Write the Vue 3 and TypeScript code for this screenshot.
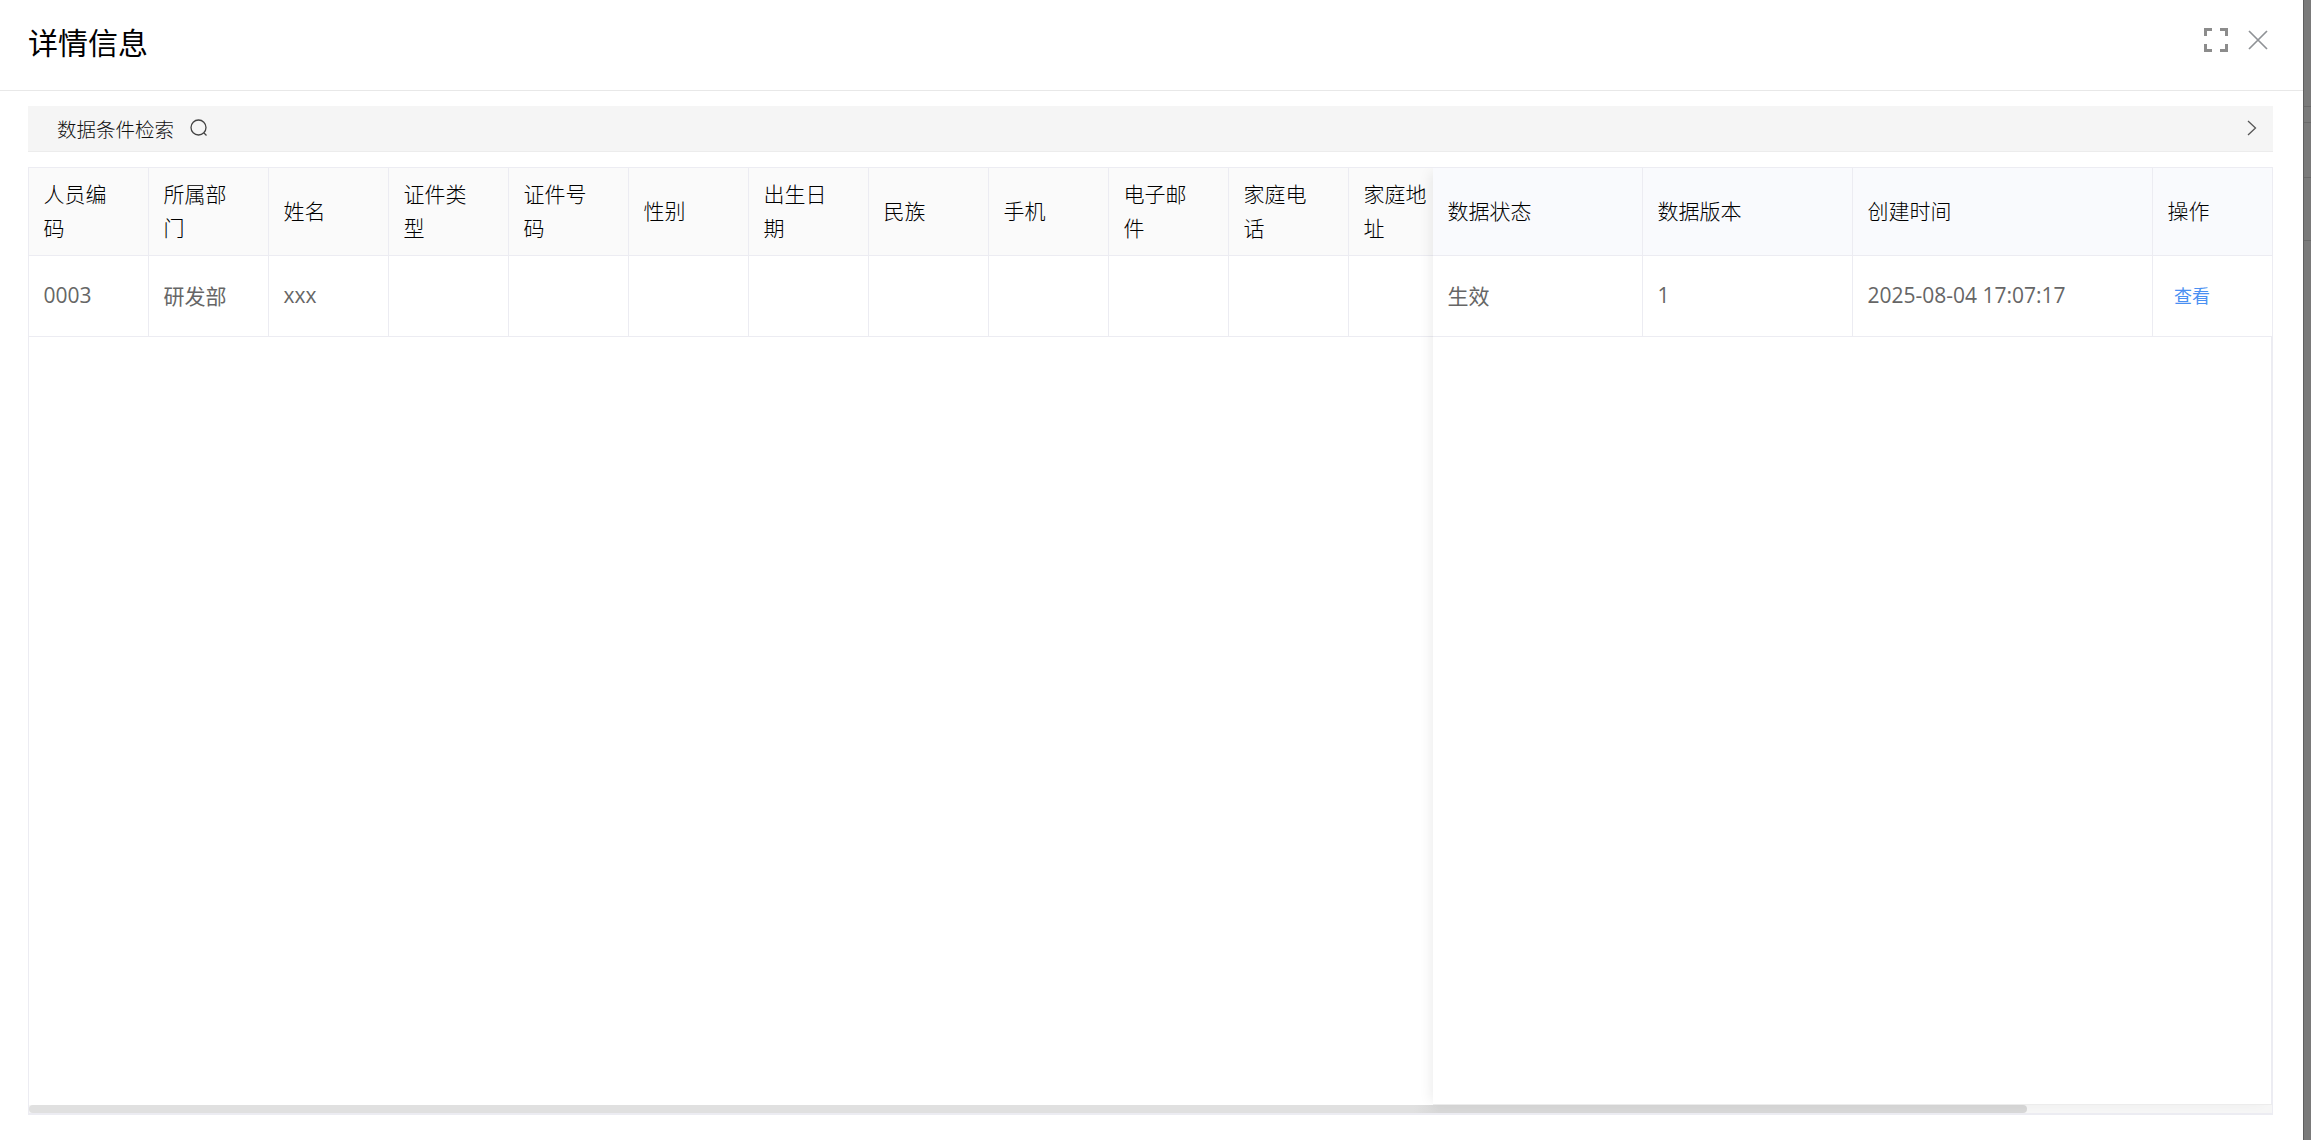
<script setup lang="ts">
interface Col { title: string; value?: string; link?: boolean }

const scrollCols: Col[] = [
  { title: '人员编码', value: '0003' },
  { title: '所属部门', value: '研发部' },
  { title: '姓名', value: 'xxx' },
  { title: '证件类型' },
  { title: '证件号码' },
  { title: '性别' },
  { title: '出生日期' },
  { title: '民族' },
  { title: '手机' },
  { title: '电子邮件' },
  { title: '家庭电话' },
  { title: '家庭地址' },
]

const fixedCols: (Col & { width: number })[] = [
  { title: '数据状态', value: '生效', width: 210 },
  { title: '数据版本', value: '1', width: 210 },
  { title: '创建时间', value: '2025-08-04 17:07:17', width: 300 },
  { title: '操作', value: '查看', link: true, width: 119 },
]
</script>

<template>
  <div class="backdrop">
    <section class="dialog">
      <header class="head">
        <h1 class="title">详情信息</h1>
        <div class="tools">
          <svg width="24" height="24" viewBox="0 0 24 24" fill="none" stroke="#8c8c8c" stroke-width="3">
            <path d="M1.500 8V1.500H8M16 1.500h6.500V8M22.500 16v6.500H16M8 22.500H1.500V16" />
          </svg>
          <svg class="ico-close" width="20" height="20" viewBox="0 0 20 20" fill="none" stroke="#8f9296" stroke-width="1.700">
            <path d="M1 1l18 18M19 1L1 19" />
          </svg>
        </div>
      </header>

      <div class="body">
        <div class="search">
          <span class="search-label">数据条件检索</span>
          <svg class="search-ico" width="20" height="20" viewBox="0 0 20 20" fill="none" stroke="#444" stroke-width="1.300">
            <circle cx="9.500" cy="9.500" r="7.500" />
            <path d="M15 15l2.500 2.500" />
          </svg>
          <svg class="chev" width="10" height="16" viewBox="0 0 10 16" fill="none" stroke="#555" stroke-width="1.300">
            <path d="M1 1l7.500 7L1 15" />
          </svg>
        </div>

        <div class="table">
          <div class="scroll-part">
            <div v-for="c in scrollCols" :key="c.title" class="col">
              <div class="cell th">{{ c.title }}</div>
              <div class="cell td">{{ c.value }}</div>
            </div>
          </div>
          <div class="scrollbar"><div class="thumb"></div></div>
          <div class="fixed-part">
            <div v-for="c in fixedCols" :key="c.title" class="col fixed-col" :style="{ width: c.width + 'px' }">
              <div class="cell th th-fixed">{{ c.title }}</div>
              <div class="cell td" :class="{ link: c.link }">{{ c.value }}</div>
            </div>
          </div>
        </div>
      </div>
    </section>
  </div>
</template>

<style>
html, body { margin: 0; padding: 0; background: #fff; overflow: hidden; }
</style>

<style scoped>
.backdrop {
  width: 2311px;
  height: 1140px;
  background-color: #7a7a7a;
  background-image:
    linear-gradient(#6a6a6a, #6a6a6a),
    linear-gradient(#6a6a6a, #6a6a6a),
    linear-gradient(#6a6a6a, #6a6a6a),
    linear-gradient(#6a6a6a, #6a6a6a);
  background-repeat: no-repeat;
  background-size: 100% 1px;
  background-position: 0 106px, 0 122px, 0 177px, 0 240px;
  overflow: hidden;
}
.dialog {
  width: 2303px;
  height: 1140px;
  background: #fff;
  font-family: "Noto Sans CJK SC", "Liberation Sans", sans-serif;
  display: flex;
  flex-direction: column;
  border-right: 1px solid #5e5e5e;
  box-sizing: content-box;
}
.head {
  height: 91px;
  flex: none;
  box-sizing: border-box;
  border-bottom: 1px solid #e8e8e8;
  padding: 0 35px 0 28px;
  display: flex;
  justify-content: space-between;
}
.title {
  margin: 0;
  font-size: 30px;
  line-height: 82px;
  font-weight: 400;
  color: #000;
}
.tools {
  display: flex;
  align-items: flex-start;
  gap: 20px;
  padding-top: 28px;
}
.ico-close { margin-top: 2px; }
.body {
  padding: 15px 30px 0 28px;
}
.search {
  height: 46px;
  box-sizing: border-box;
  background: #f5f5f5;
  border-bottom: 1px solid #ececec;
  padding: 0 16px 0 29px;
  display: flex;
  align-items: center;
  font-size: 19.5px;
  font-weight: 300;
  color: #111;
}
.search-ico { margin-left: 15px; margin-top: -1px; }
.chev { margin-left: auto; margin-top: -2px; }
.table {
  position: relative;
  margin-top: 15px;
  height: 948px;
  box-sizing: border-box;
  border: 1px solid #ececf2;
  overflow: hidden;
}
.scroll-part { display: flex; }
.col { flex: none; width: 120px; }
.cell {
  box-sizing: border-box;
  border-right: 1px solid #ececf2;
  border-bottom: 1px solid #ececf2;
  padding: 0 28px 3px 14.500px;
  display: flex;
  align-items: center;
  font-size: 21px;
  font-weight: 300;
}
.th {
  height: 88px;
  line-height: 34px;
  background: #fafafa;
  color: #000;
}
.td {
  height: 81px;
  background: #fff;
  color: #666;
  font-weight: 400;
  font-family: "Open Sans", "Noto Sans CJK SC", sans-serif;
}
.fixed-part {
  position: absolute;
  top: 0;
  right: 0;
  bottom: 9px;
  display: flex;
  background: #fff;
  box-shadow: -6px 0 12px -4px rgba(0, 0, 0, 0.08);
  border-bottom: 1px solid #ececec;
}
.fixed-part::after {
  content: "";
  position: absolute;
  top: 169px;
  right: 0;
  bottom: 0;
  width: 1px;
  background: #ececf2;
}
.fixed-col:last-child .cell { border-right: none; }
.th-fixed { background: #f9fafd; }
.fixed-part .cell { padding-right: 14px; }
.td.link {
  color: #4a90f2;
  font-size: 18px;
  padding-left: 21px;
}
.scrollbar {
  position: absolute;
  left: 0;
  right: 0;
  bottom: 0;
  height: 9px;
  box-sizing: border-box;
  background: #f6f6f6;
  border-bottom: 1px solid #ececf2;
}
.thumb {
  width: 1998px;
  height: 8px;
  background: linear-gradient(to right, #e0e0e0 1385px, #d7d7d7 1410px);
  border-radius: 5px;
}
</style>
